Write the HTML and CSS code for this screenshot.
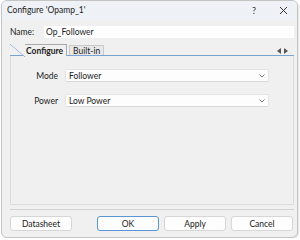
FILE: index.html
```html
<!DOCTYPE html>
<html lang="en">
<head>
  <meta charset="UTF-8">
  <title>Configure 'Opamp_1'</title>
  <link rel="stylesheet" href="styles.css">
</head>
<body>
  <div class="window">
    <!-- title bar -->
    <div class="titlebar">
      <span class="title">Configure 'Opamp_1'</span>
      <span class="help">?</span>
      <svg class="close" width="9" height="9" viewBox="0 0 9 9"><path d="M1 1L8 8M8 1L1 8" stroke="#333" stroke-width="1"/></svg>
    </div>

    <div class="content">
      <div class="name-row">
        <label class="name-label">Name:</label>
        <div class="field">Op_Follower</div>
      </div>

      <!-- tabs -->
      <div class="tabstrip">
        <div class="tab active">Configure</div>
        <div class="tab">Built-in</div>
        <div class="scroll">
          <svg width="4" height="6" viewBox="0 0 4 6"><path d="M4 0L0 3L4 6Z" fill="#555"/></svg>
          <svg width="4" height="6" viewBox="0 0 4 6"><path d="M0 0L4 3L0 6Z" fill="#555"/></svg>
        </div>
      </div>

      <div class="panel">
        <div class="row">
          <span class="row-label">Mode</span>
          <div class="select">Follower
            <svg class="chev" width="6" height="4" viewBox="0 0 6 4"><path d="M0.5 0.5L3 3L5.5 0.5" fill="none" stroke="#777" stroke-width="1"/></svg>
          </div>
        </div>
        <div class="row">
          <span class="row-label">Power</span>
          <div class="select">Low Power
            <svg class="chev" width="6" height="4" viewBox="0 0 6 4"><path d="M0.5 0.5L3 3L5.5 0.5" fill="none" stroke="#777" stroke-width="1"/></svg>
          </div>
        </div>
      </div>

      <div class="sep"></div>

      <div class="buttons">
        <button class="btn">Datasheet</button>
        <span class="grow"></span>
        <button class="btn default">OK</button>
        <button class="btn">Apply</button>
        <button class="btn">Cancel</button>
      </div>
    </div>
  </div>
</body>
</html>
```

FILE: styles.css
```css
*{box-sizing:border-box}
body{margin:0;background:#fff;font-family:Lato,"Open Sans",Arial,sans-serif;font-size:8.5px;color:#1b1b1b}
.window{
  width:297px;height:238px;margin-left:1px;
  border:1px solid #c4c4c4;border-radius:6px;background:#f0f0f0;
  display:flex;flex-direction:column;overflow:hidden;
  box-shadow:1px 1px 2px rgba(0,0,0,.12)
}
/* title bar */
.titlebar{height:18px;background:#eef2f7;display:flex;align-items:center;padding:0 0 0 5px}
.title{flex:1}
.help{width:10px;margin-right:17px;font-size:9px;color:#333}
.close{margin-right:9px}
.content{flex:1;display:flex;flex-direction:column;padding:7px 3px 0 8px}
/* name */
.name-row{display:flex;align-items:center;height:12px}
.name-label{width:34px}
.field{flex:1;height:12px;background:#fff;padding:0 0 0 2px;line-height:12px}
/* tabs */
.tabstrip{display:flex;align-items:flex-end;height:12px;margin-top:6px;border-bottom:1px solid #7aa3d3}
.tab{
  height:10px;line-height:10px;padding:0 3px;
  border:1px solid #c9c9c9;border-bottom:none;background:#e8e8e8;margin-left:2px
}
.tab.active{
  position:relative;height:12px;margin-left:15px;margin-bottom:-1px;
  background:#f0f0f0;border-color:#a9a9a9;border-left:none;font-weight:bold;padding:0 3px 0 1px;line-height:12px
}
.tab.active::before{
  content:"";position:absolute;left:-15px;top:-1px;width:15px;height:13px;
  background:linear-gradient(to top right,transparent calc(50% - .6px),#8fb1da 50%,#f0f0f0 calc(50% + .6px))
}
.scroll{margin-left:auto;margin-right:6px;margin-bottom:1px;display:flex;gap:3px}
/* panel */
.panel{
  height:149px;border:1px solid #dcdcdc;border-top:none;
  padding-top:13px;display:flex;flex-direction:column;gap:12px
}
.row{display:flex;align-items:center;height:13px}
.row-label{width:47px;text-align:right}
.select{
  position:relative;width:204px;height:13px;margin-left:7px;line-height:12px;padding-left:3px;
  background:#fdfdfd;border:1px solid #e4e4e4;border-radius:2px;border-bottom-color:#d8d8d8
}
.chev{position:absolute;right:3px;top:4px}
.sep{height:1px;background:#d4d4d4;margin-top:4px}
/* buttons */
.buttons{display:flex;margin-top:6px;gap:5px;padding-right:1px}
.btn{
  width:62px;height:15px;padding:0;font:inherit;color:#1b1b1b;
  background:#fdfdfd;border:1px solid #d6d6d6;border-radius:3px
}
.btn.default{border-color:#5a95d6}
.grow{flex:1}
```
